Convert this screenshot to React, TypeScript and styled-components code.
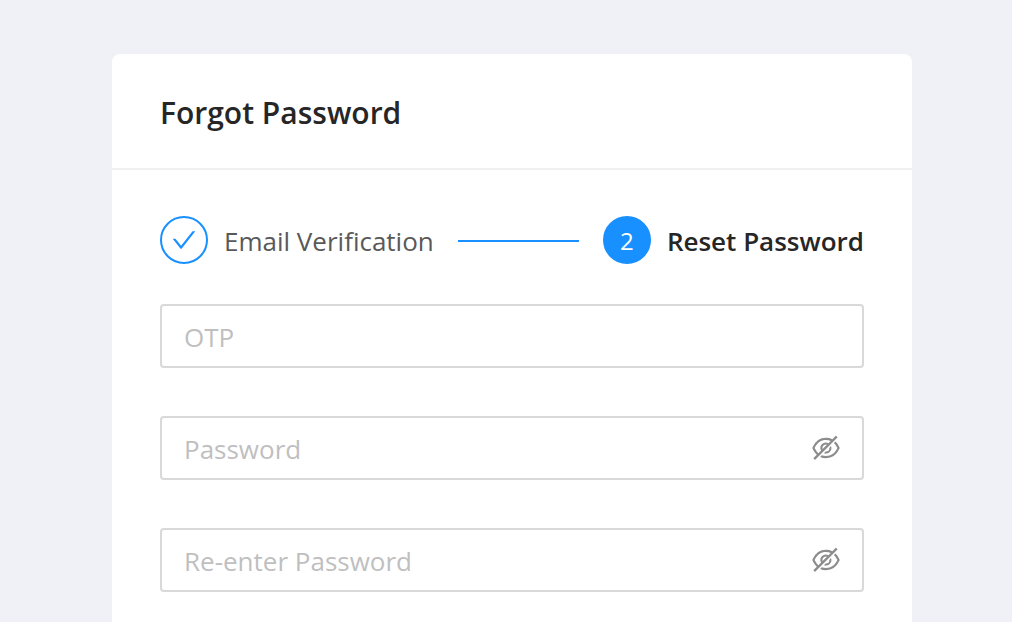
import React, { useState } from "react";
import styled, { createGlobalStyle } from "styled-components";
import {
  AiOutlineCheck,
  AiOutlineEye,
  AiOutlineEyeInvisible,
} from "react-icons/ai";

const GlobalStyle = createGlobalStyle`
  *, *::before, *::after { box-sizing: border-box; }
  body {
    margin: 0;
    background: #f0f1f6;
    color: #262626;
    font-family: "Segoe UI", "Open Sans", "Noto Sans", sans-serif;
    font-size: 26px;
  }
`;

const Page = styled.main`
  display: flex;
  flex-direction: column;
  min-height: 100vh;
  padding: 54px 100px 0 112px;
`;

const Card = styled.section`
  flex: 1;
  display: flex;
  flex-direction: column;
  background: #fff;
  border-radius: 8px 8px 0 0;
`;

const CardHeader = styled.header`
  padding: 37px 48px 33px;
  border-bottom: 2px solid #f0f0f0;
`;

const Title = styled.h1`
  margin: 0;
  font-size: 30px;
  font-weight: 600;
  line-height: 44px;
`;

const CardBody = styled.form`
  display: flex;
  flex-direction: column;
  gap: 40px;
  padding: 46px 48px 30px;
`;

const Steps = styled.ol`
  display: flex;
  align-items: center;
  gap: 24px;
  margin: 0;
  padding: 0;
  list-style: none;
`;

const Step = styled.li<{ $grow?: boolean }>`
  display: flex;
  align-items: center;
  flex: ${(p) => (p.$grow ? "1" : "none")};
`;

const StepIcon = styled.span<{ $active?: boolean }>`
  display: flex;
  align-items: center;
  justify-content: center;
  flex: none;
  width: 48px;
  height: 48px;
  margin-right: 16px;
  border: 2px solid #1890ff;
  border-radius: 50%;
  background: ${(p) => (p.$active ? "#1890ff" : "#fff")};
  color: ${(p) => (p.$active ? "#fff" : "#1890ff")};
  font-size: ${(p) => (p.$active ? "24px" : "28px")};
`;

const StepTitle = styled.span<{ $active?: boolean }>`
  padding-top: 2px;
  color: ${(p) => (p.$active ? "#262626" : "#595959")};
  font-weight: ${(p) => (p.$active ? 600 : 400)};
  white-space: nowrap;
`;

const StepLine = styled.span`
  flex: 1;
  height: 2px;
  margin: 2px 0 0 24px;
  background: #1890ff;
`;

const Fields = styled.div`
  display: flex;
  flex-direction: column;
  gap: 48px;
`;

const Field = styled.div`
  display: flex;
  align-items: center;
  height: 64px;
  padding: 0 20px 0 22px;
  border: 2px solid #d9d9d9;
  border-radius: 4px;
  background: #fff;

  &:focus-within {
    border-color: #40a9ff;
  }
`;

const Input = styled.input`
  flex: 1;
  min-width: 0;
  padding: 2px 0 0;
  border: 0;
  outline: 0;
  background: transparent;
  color: #262626;
  font: inherit;

  &::placeholder {
    color: #bfbfbf;
    opacity: 1;
  }
`;

const RevealButton = styled.button`
  display: flex;
  padding: 0;
  border: 0;
  background: transparent;
  color: #8c8c8c;
  font-size: 32px;
  cursor: pointer;
`;

function PasswordField({ label }: { label: string }) {
  const [visible, setVisible] = useState(false);
  return (
    <Field>
      <Input
        type={visible ? "text" : "password"}
        placeholder={label}
        aria-label={label}
        autoComplete="new-password"
      />
      <RevealButton
        type="button"
        aria-label={visible ? "Hide password" : "Show password"}
        onClick={() => setVisible(!visible)}
      >
        {visible ? <AiOutlineEye /> : <AiOutlineEyeInvisible />}
      </RevealButton>
    </Field>
  );
}

export default function App() {
  return (
    <>
      <GlobalStyle />
      <Page>
        <Card>
          <CardHeader>
            <Title>Forgot Password</Title>
          </CardHeader>
          <CardBody onSubmit={(e) => e.preventDefault()}>
            <Steps>
              <Step $grow>
                <StepIcon>
                  <AiOutlineCheck />
                </StepIcon>
                <StepTitle>Email Verification</StepTitle>
                <StepLine />
              </Step>
              <Step aria-current="step">
                <StepIcon $active>2</StepIcon>
                <StepTitle $active>Reset Password</StepTitle>
              </Step>
            </Steps>
            <Fields>
              <Field>
                <Input type="text" placeholder="OTP" aria-label="OTP" />
              </Field>
              <PasswordField label="Password" />
              <PasswordField label="Re-enter Password" />
            </Fields>
          </CardBody>
        </Card>
      </Page>
    </>
  );
}
